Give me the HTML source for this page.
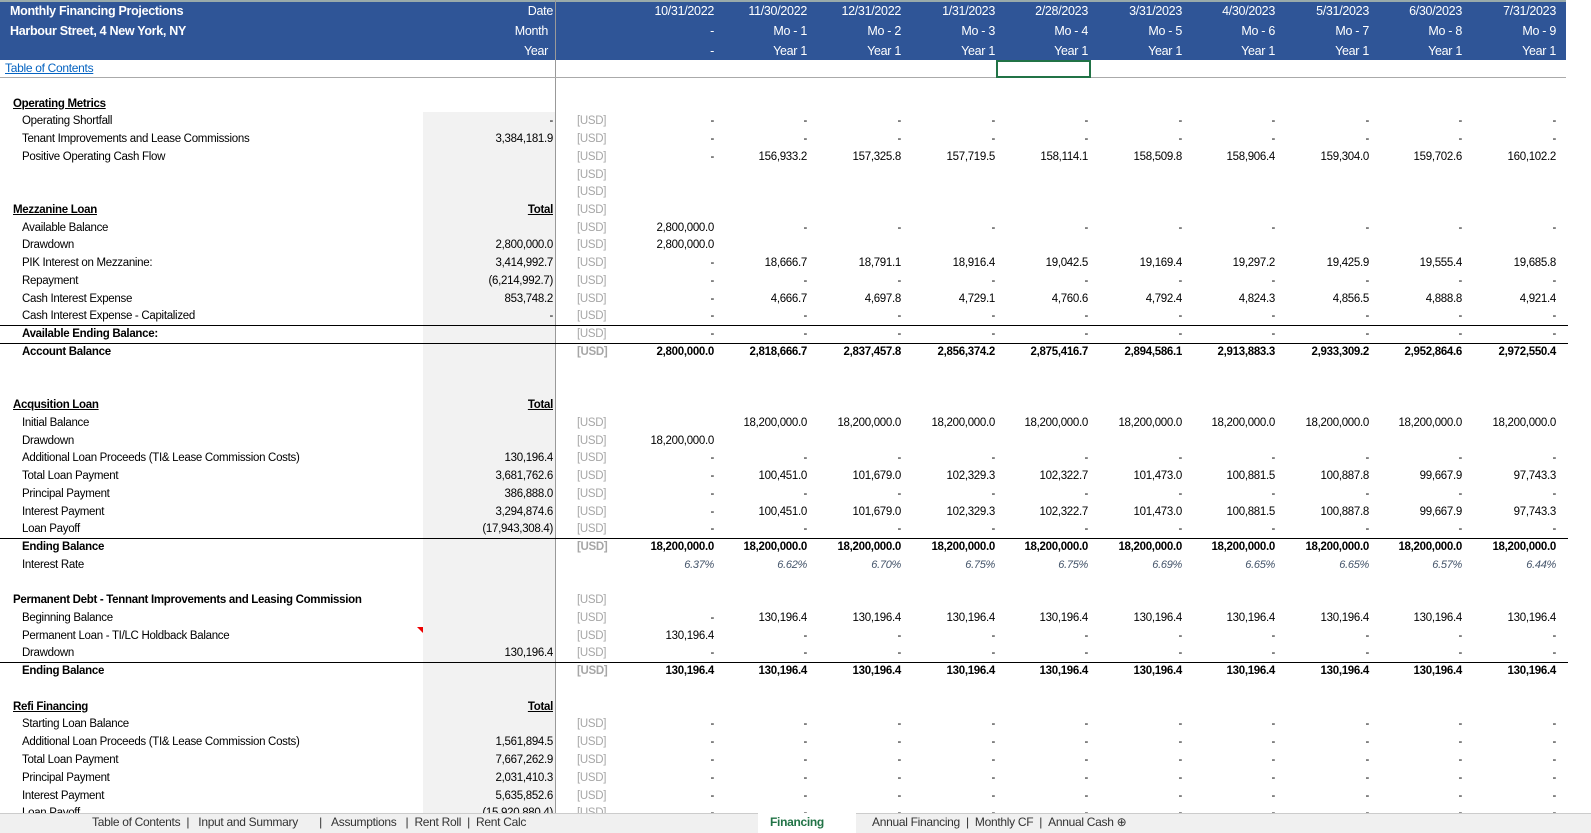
<!DOCTYPE html>
<html><head><meta charset="utf-8">
<style>
*{margin:0;padding:0;box-sizing:border-box}
body{width:1591px;height:833px;overflow:hidden;background:#fff;font-family:"Liberation Sans",Arial,sans-serif;font-size:11.5px;color:#000;position:relative;letter-spacing:-0.3px}
.a{position:absolute;white-space:nowrap;line-height:14px}
.hd{position:absolute;left:0;top:0;width:1568px;height:60px;background:#2F5597}
.w{color:#fff;font-size:12.5px}
.b{font-weight:bold}
.u{text-decoration:underline}
.g{color:#a6a6a6}
.i{color:#44546A;font-style:italic;font-size:11px}
.lnk{color:#0563C1;text-decoration:underline;font-size:12px}
.hl{position:absolute;left:0;width:1568px;height:1px;background:#000}
</style></head><body>
<div class="hd"></div>
<div style="position:absolute;left:0;top:0;width:1568px;height:2px;background:#9aa"></div>
<div style="position:absolute;left:555px;top:0;width:1px;height:813px;background:#999"></div>
<div style="position:absolute;left:423px;top:112px;width:132px;height:701px;background:#f2f2f2"></div>
<div style="position:absolute;left:0;top:77px;width:1568px;height:1px;background:#aaa"></div>
<div style="position:absolute;left:996px;top:60px;width:95px;height:18px;border:2px solid #217346"></div>
<div style="position:absolute;left:1566px;top:0;width:25px;height:813px;background:#fff"></div>
<div id="c"></div>
<div style="position:absolute;left:0;top:813px;width:1591px;height:20px;background:#f0f0f0;border-top:1px solid #ccc"></div>
<div style="position:absolute;left:758px;top:813px;width:98px;height:20px;background:#fff"></div>
<div class="a" style="top:815px;left:92px;font-size:12px;color:#333">Table of Contents&nbsp;&nbsp;|&nbsp;&nbsp;&nbsp;Input and Summary&nbsp;&nbsp;&nbsp;&nbsp;&nbsp;&nbsp;&nbsp;|&nbsp;&nbsp;&nbsp;Assumptions&nbsp;&nbsp;&nbsp;|&nbsp;&nbsp;Rent Roll&nbsp;&nbsp;|&nbsp;&nbsp;Rent Calc</div>
<div class="a b" style="top:815px;left:770px;font-size:12px;color:#217346">Financing</div>
<div class="a" style="top:815px;left:872px;font-size:12px;color:#333">Annual Financing&nbsp;&nbsp;|&nbsp;&nbsp;Monthly CF&nbsp;&nbsp;|&nbsp;&nbsp;Annual Cash ⊕</div>
<script>
const C=document.getElementById('c');let h='';
function t(x,y,s,cls,right){h+=`<div class="a ${cls||''}" style="${right?'right:'+(1591-x)+'px':'left:'+x+'px'};top:${y-7}px">${s}</div>`;}
const cols=[714,807,901,995,1088,1182,1275,1369,1462,1556];
t(10,11,'Monthly Financing Projections','w b');t(10,31,'Harbour Street, 4 New York, NY','w b');
t(553,11,'Date','w',1);t(548,31,'Month','w',1);t(548,51,'Year','w',1);
const d=['10/31/2022','11/30/2022','12/31/2022','1/31/2023','2/28/2023','3/31/2023','4/30/2023','5/31/2023','6/30/2023','7/31/2023'];
d.forEach((s,i)=>{t(cols[i],11,s,'w',1);t(cols[i],31,i?'Mo - '+i:'-','w',1);t(cols[i],51,i?'Year 1':'-','w',1);});
t(5,68,'Table of Contents','lnk');
function row(y,label,o){o=o||{};
 if(label)t(o.h?13:22,y,label,(o.h?'b u ':'')+(o.b?'b':''));
 if(o.tot!==undefined)t(553,y,o.tot,o.tu?'b u':'',1);
 if(o.usd!==false)t(577,y,'[USD]','g'+(o.b?' b':''));
 if(o.v){o.v.forEach((s,i)=>{if(s!==null)t(cols[i],y,s,o.b?'b':(o.ic?'i':''),1);});}
}
const dash=Array(10).fill('-');
function rep(a,b){return [a].concat(Array(9).fill(b));}
row(104,'Operating Metrics',{h:1,usd:false});
row(121,'Operating Shortfall',{tot:'-',v:dash});
row(139,'Tenant Improvements and Lease Commissions',{tot:'3,384,181.9',v:dash});
row(157,'Positive Operating Cash Flow',{v:['-','156,933.2','157,325.8','157,719.5','158,114.1','158,509.8','158,906.4','159,304.0','159,702.6','160,102.2']});
row(175,'',{});row(192,'',{});
row(210,'Mezzanine Loan',{h:1,tot:'Total',tu:1});
row(228,'Available Balance',{v:rep('2,800,000.0','-')});
row(245,'Drawdown',{tot:'2,800,000.0',v:['2,800,000.0'].concat(Array(9).fill(null))});
row(263,'PIK Interest on Mezzanine:',{tot:'3,414,992.7',v:['-','18,666.7','18,791.1','18,916.4','19,042.5','19,169.4','19,297.2','19,425.9','19,555.4','19,685.8']});
row(281,'Repayment',{tot:'(6,214,992.7)',v:dash});
row(299,'Cash Interest Expense',{tot:'853,748.2',v:['-','4,666.7','4,697.8','4,729.1','4,760.6','4,792.4','4,824.3','4,856.5','4,888.8','4,921.4']});
row(316,'Cash Interest Expense - Capitalized',{tot:'-',v:dash});
row(334,'',{v:dash});
t(22,334,'Available Ending Balance:','b');
row(352,'Account Balance',{b:1,v:['2,800,000.0','2,818,666.7','2,837,457.8','2,856,374.2','2,875,416.7','2,894,586.1','2,913,883.3','2,933,309.2','2,952,864.6','2,972,550.4']});
row(405,'Acqusition Loan',{h:1,tot:'Total',tu:1,usd:false});
row(423,'Initial Balance',{v:[null].concat(Array(9).fill('18,200,000.0'))});
row(441,'Drawdown',{v:['18,200,000.0'].concat(Array(9).fill(null))});
row(458,'Additional Loan Proceeds (TI& Lease Commission Costs)',{tot:'130,196.4',v:dash});
const pay=['-','100,451.0','101,679.0','102,329.3','102,322.7','101,473.0','100,881.5','100,887.8','99,667.9','97,743.3'];
row(476,'Total Loan Payment',{tot:'3,681,762.6',v:pay});
row(494,'Principal Payment',{tot:'386,888.0',v:dash});
row(512,'Interest Payment',{tot:'3,294,874.6',v:pay});
row(529,'Loan Payoff',{tot:'(17,943,308.4)',v:dash});
row(547,'Ending Balance',{b:1,v:Array(10).fill('18,200,000.0')});
row(565,'Interest Rate',{usd:false,ic:1,v:['6.37%','6.62%','6.70%','6.75%','6.75%','6.69%','6.65%','6.65%','6.57%','6.44%']});
row(600,'',{});t(13,600,'Permanent Debt - Tennant Improvements and Leasing Commission','b');
row(618,'Beginning Balance',{v:rep('-','130,196.4')});
row(636,'Permanent Loan - TI/LC Holdback Balance',{v:rep('130,196.4','-')});
row(653,'Drawdown',{tot:'130,196.4',v:dash});
row(671,'Ending Balance',{b:1,v:Array(10).fill('130,196.4')});
row(707,'Refi Financing',{h:1,tot:'Total',tu:1,usd:false});
row(724,'Starting Loan Balance',{v:dash});
row(742,'Additional Loan Proceeds (TI& Lease Commission Costs)',{tot:'1,561,894.5',v:dash});
row(760,'Total Loan Payment',{tot:'7,667,262.9',v:dash});
row(778,'Principal Payment',{tot:'2,031,410.3',v:dash});
row(796,'Interest Payment',{tot:'5,635,852.6',v:dash});
row(813,'Loan Payoff',{tot:'(15,920,880.4)',v:dash});
[325,343,538,662].forEach(y=>h+=`<div class="hl" style="top:${y}px"></div>`);
h+='<div style="position:absolute;left:417px;top:627px;width:0;height:0;border-left:6px solid transparent;border-top:6px solid #e00"></div>';
C.innerHTML=h;
</script>
</body></html>
